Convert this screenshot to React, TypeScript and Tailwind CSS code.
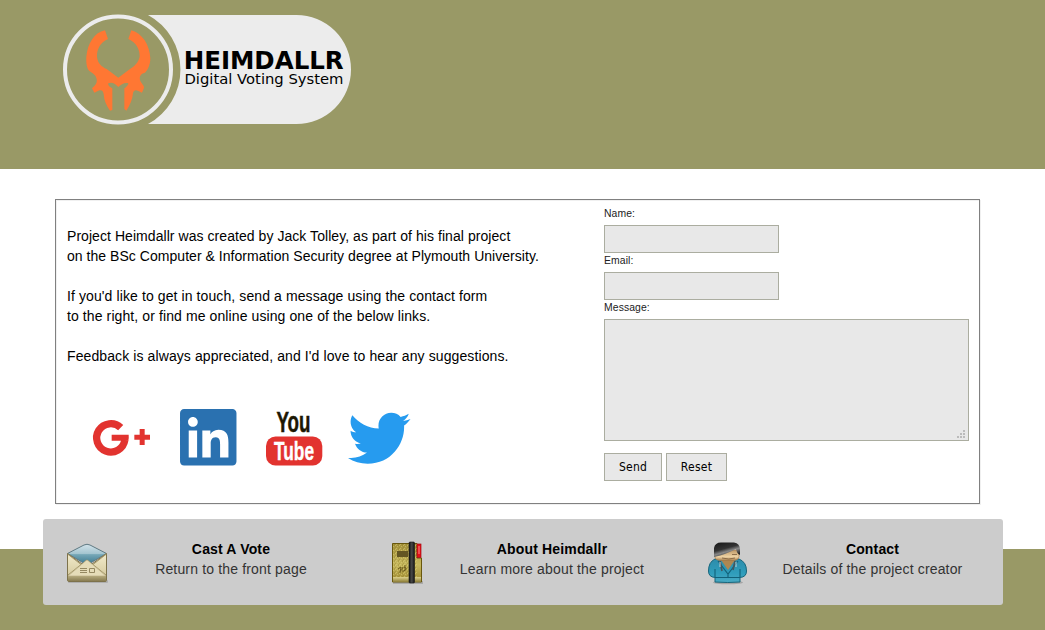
import type { ReactNode } from 'react';
import { FaLinkedin, FaTwitter } from 'react-icons/fa';

function Logo() {
  return (
    <svg width="300" height="120" viewBox="0 0 300 120" className="block">
      <path d="M93 10H241A54.5 54.5 0 0 1 296 64.5A54.5 54.5 0 0 1 241 119H93A62 62 0 0 0 93 10Z" fill="#ececec" />
      <circle cx="63" cy="64.5" r="53" fill="none" stroke="#ececec" strokeWidth="4" />
      <path
        transform="scale(.33333)"
        fill="#ff7733"
        d="M150 76L159 102C135 112 125 135 126 155C128 175 140 185 155 192L190 218L222 194C240 183 250 172 254 155C255 135 244 112 220 102L229 76C262 85 284 120 286 160C286 180 278 195 270 203C256 206 252 215 256 228C262 238 268 243 267 248L261 263L250 258C240 253 235 258 234 265C232 285 225 300 214 317L208 312V250C214 246 221 240 220 235C210 231 198 238 190 246C182 238 172 230 160 235C158 241 165 247 172 250V315L165 317C153 300 147 285 146 268C144 256 140 254 130 257L118 263L111 250C120 242 127 235 125 222C122 208 112 205 103 198C96 190 93 175 94 155C98 115 118 82 150 76Z"
      />
      <text x="128.7" y="64" fontSize="24" fontWeight="700" textLength="160" lengthAdjust="spacingAndGlyphs" fontFamily="DejaVu Sans, sans-serif">HEIMDALLR</text>
      <text x="129.5" y="79.3" fontSize="14.6" textLength="159" lengthAdjust="spacingAndGlyphs" fontFamily="DejaVu Sans, sans-serif">Digital Voting System</text>
    </svg>
  );
}

function GooglePlus() {
  return (
    <svg width="58" height="38" viewBox="0 0 174 114" className="block overflow-visible">
      <path d="M83 29A42.5 42.5 0 1 0 95.5 66" fill="none" stroke="#e2332f" strokeWidth="22" />
      <path d="M56 50H107Q108 60 106 68H56ZM124 50H140V33H155V50H171V65H155V81H140V65H124Z" fill="#e2332f" />
    </svg>
  );
}

function YouTube() {
  return (
    <svg width="60" height="60" viewBox="0 0 60 60" className="block overflow-visible">
      <text x="10.5" y="23.4" fontSize="29" fontWeight="700" fill="#1d1703" stroke="#1d1703" strokeWidth=".5" textLength="34" lengthAdjust="spacingAndGlyphs" fontFamily="Liberation Sans Narrow, Liberation Sans, sans-serif">You</text>
      <rect x="0" y="27.5" width="56.3" height="29" rx="9.5" fill="#e2332f" />
      <text x="8" y="51.2" fontSize="26" fontWeight="700" fill="#fff" stroke="#fff" strokeWidth=".4" textLength="40" lengthAdjust="spacingAndGlyphs" fontFamily="Liberation Sans Narrow, Liberation Sans, sans-serif">Tube</text>
    </svg>
  );
}

function EnvelopeIcon() {
  return (
    <svg width="44" height="44" viewBox="0 0 44 44" className="block">
      <defs>
        <linearGradient id="lining" x2="0" y2="1"><stop stopColor="#d3e3ea" /><stop offset=".45" stopColor="#a4c5d0" /><stop offset=".5" stopColor="#75a7b7" /><stop offset="1" stopColor="#36758b" /></linearGradient>
        <linearGradient id="paper" x2="0" y2="1"><stop stopColor="#f2ebcc" /><stop offset="1" stopColor="#cfc394" /></linearGradient>
        <linearGradient id="band" x2="0" y2="1"><stop stopColor="#b5aa7d" /><stop offset="1" stopColor="#897d53" /></linearGradient>
      </defs>
      <rect x="2" y="39" width="40" height="3" rx="1" fill="#777" opacity=".35" />
      <path d="M1.5 12.5L18 4Q21 2.5 24 4L40.5 12.5L21 24Z" fill="url(#lining)" stroke="#5f7982" />
      <path d="M1.5 12.5L16 23L21 19L26 23L40.5 12.5V39.5Q40.5 40.5 39 40.5H3Q1.5 40.5 1.5 39Z" fill="url(#paper)" stroke="#7d724b" />
      <path d="M1.5 13L15 23.5L2 34M40.5 13L27 23.5L40 34" fill="none" stroke="#9d9063" strokeWidth=".9" />
      <path d="M15 24L20 19.5Q21 18.5 22 19.5L27 24L40 35H2Z" fill="#e5dcb8" stroke="#b5aa80" strokeWidth=".6" />
      <rect x="2" y="35" width="38" height="5" fill="url(#band)" />
      <path d="M14 27.5H21M14 29.5H21M14 31.5H21M23.5 27.5H28.5V31.5H23.5Z" fill="none" stroke="#948861" />
    </svg>
  );
}

function NotebookIcon() {
  return (
    <svg width="34" height="44" viewBox="0 0 34 44" className="block">
      <defs>
        <linearGradient id="cover" x2="0" y2="1"><stop stopColor="#a4913b" /><stop offset=".55" stopColor="#c6b75e" /><stop offset=".84" stopColor="#ac9940" /></linearGradient>
        <linearGradient id="edge" x2="0" y2="1"><stop stopColor="#ddd18b" /><stop offset="1" stopColor="#8d7e38" /></linearGradient>
        <linearGradient id="strap"><stop stopColor="#111" /><stop offset=".5" stopColor="#494949" /><stop offset="1" stopColor="#111" /></linearGradient>
        <pattern id="grain" width="4" height="4" patternUnits="userSpaceOnUse"><path d="M0 0H1V1H0ZM2 1H3V2H2ZM1 3H2V4H1Z" fill="#ded178" opacity=".5" /><path d="M3 0H4V1H3ZM0 2H1V3H0ZM3 3H4V4H3Z" fill="#86741b" opacity=".3" /></pattern>
      </defs>
      <rect x="2" y="40" width="30" height="3" fill="#777" opacity=".4" />
      <path d="M1.5 2.5H26V17H30.5V41H1.5Z" fill="url(#cover)" stroke="#68570d" />
      <rect x="2" y="3" width="24" height="33" fill="url(#grain)" />
      <rect x="2" y="36" width="28" height="5" fill="url(#edge)" />
      <rect x="6" y="10" width="11" height="6" fill="#635523" />
      <path d="M7 28L10 26L9 32M12 26Q9 31 13 30Q17 27 13 26M14 24V30" fill="none" stroke="#6a591b" />
      <rect x="18" y="1" width="5.5" height="41" rx="1" fill="url(#strap)" stroke="#191919" strokeWidth=".6" />
      <rect x="26" y="3" width="4" height="13.5" fill="#e51018" stroke="#a20a10" strokeWidth=".7" /><path d="M28 5V13" stroke="#ff8888" />
    </svg>
  );
}

function PersonIcon() {
  return (
    <svg width="42" height="44" viewBox="0 0 42 44" className="block">
      <defs>
        <linearGradient id="hair" x2=".5" y2="1"><stop stopColor="#171717" /><stop offset=".5" stopColor="#333" /><stop offset=".7" stopColor="#888" /><stop offset="1" stopColor="#232323" /></linearGradient>
        <linearGradient id="face" x2="0" y2="1"><stop stopColor="#bc9766" /><stop offset=".65" stopColor="#eed3a4" /><stop offset="1" stopColor="#a77f50" /></linearGradient>
        <linearGradient id="hoodie" x2="0" y2="1"><stop stopColor="#2d8cab" /><stop offset=".6" stopColor="#2f9dbb" /><stop offset="1" stopColor="#4aaac3" /></linearGradient>
      </defs>
      <ellipse cx="21" cy="40.5" rx="15" ry="1.8" fill="#666" opacity=".4" />
      <path d="M8 17H32Q39.5 20 39.5 29Q39.5 35 33 35.5V40Q21 41 8 40V35.5Q1.5 35 1.5 29Q1.5 20 8 17Z" fill="url(#hoodie)" stroke="#17657b" />
      <path d="M14 18H28L21 28Z" fill="#ad8752" />
      <path d="M11 19L21 32L31 19M21 32V36M8 35.5H33M8 27V35M33 27V35" fill="none" stroke="#116179" strokeWidth="1.1" />
      <path d="M13 19L15 29M28 19L26 28" stroke="#45575d" strokeWidth="1.6" />
      <path d="M13 20V25M29 20V25" stroke="#e3ebed" strokeWidth=".8" />
      <path d="M8 8H32V15Q31 18.5 27 18.5H13Q8 18 8 15Z" fill="url(#face)" stroke="#a17747" strokeWidth=".6" />
      <path d="M7 15V6Q8 .5 14 .5H27Q33 1 33 8V13Q30 12 29 7Q20 12 7 15Z" fill="url(#hair)" />
      <path d="M25 12.5H30M15 16Q22 18 28 16" stroke="#795b39" strokeWidth=".8" fill="none" />
    </svg>
  );
}

function FooterLink({ icon, title, detail, iconClass, textClass }: { icon: ReactNode; title: string; detail: string; iconClass: string; textClass: string }) {
  return (
    <a className="flex shrink-0 items-start">
      <span className={iconClass}>{icon}</span>
      <span className={textClass}>
        <b className="block text-black">{title}</b>
        <span className="block">{detail}</span>
      </span>
    </a>
  );
}

export default function App() {
  const field = 'block h-7 w-[175px] rounded-none border border-[#abada0] bg-[#e8e8e8] px-2 outline-none';
  const label = 'block h-[19px] pt-px text-[10.4px] leading-[13px] tracking-[0.1px] text-[#222]';
  const button = "h-7 border border-[#abada0] bg-[#e8e8e8] text-center font-['DejaVu_Sans_Condensed','DejaVu_Sans',sans-serif] text-[12px] text-black";
  return (
    <div className="h-[630px] w-[1045px] overflow-hidden bg-white font-['Liberation_Sans',Arial,sans-serif] text-[14px] leading-5 text-black">
      <header className="h-[169px] bg-[#999966] pt-[5px] pl-[55px]"><Logo /></header>
      <main className="h-[380px] pt-[30px] pl-[55px]">
        <section className="flex h-[305px] w-[925px] border border-[#808080] shadow-[1px_1px_0_#f0f0f0,inset_1px_1px_0_#f0f0f0]">
          <div className="w-[548px] shrink-0 pt-[26px] pl-[11px]">
            <p><span className="tracking-[0.057px]">Project Heimdallr was created by Jack Tolley, as part of his final project</span><br /><span className="tracking-[0.04px]">on the BSc Computer &amp; Information Security degree at Plymouth University.</span></p>
            <p className="mt-5 tracking-[0.1px]">If you'd like to get in touch, send a message using the contact form<br />to the right, or find me online using one of the below links.</p>
            <p className="mt-5 tracking-[0.1px]">Feedback is always appreciated, and I'd love to hear any suggestions.</p>
            <div className="mt-[38px] flex items-start pl-[25px]">
              <span className="mt-[14px] w-[87px] pl-[0.5px]"><GooglePlus /></span>
              <span className="ml-px mt-[5px] w-[86px]">
                <span className="flex h-[57px] w-[57px] items-center overflow-hidden"><FaLinkedin className="h-[64.5px] w-[56.5px] shrink-0 text-[#2a71b0]" /></span>
              </span>
              <span className="mt-[5px] w-[82px]"><YouTube /></span>
              <FaTwitter className="mt-[3px] h-[62.5px] w-[62.5px] text-[#269bef]" />
            </div>
          </div>
          <form className="pt-[6px]" onSubmit={(event) => event.preventDefault()}>
            <label className={label} htmlFor="name">Name:</label>
            <input id="name" className={field} />
            <label className={label} htmlFor="email">Email:</label>
            <input id="email" className={field} />
            <label className={label} htmlFor="message">Message:</label>
            <div className="grid h-[122px] w-[365px] border border-[#abada0] bg-[#e8e8e8]">
              <textarea id="message" className="col-start-1 row-start-1 resize-none bg-transparent outline-none" />
              <svg className="col-start-1 row-start-1 mr-[3px] mb-[2px] self-end justify-self-end" width="8" height="8" viewBox="0 0 8 8"><path d="M6 0H8V2H6ZM3 3H5V5H3ZM6 3H8V5H6ZM0 6H2V8H0ZM3 6H5V8H3ZM6 6H8V8H6Z" fill="#bbb" /></svg>
            </div>
            <div className="mt-3 flex gap-1"><button className={`${button} w-[58px] tracking-[0.15px]`}>Send</button><button className={`${button} w-[61px] tracking-[0.25px]`} type="reset">Reset</button></div>
          </form>
        </section>
      </main>
      <footer className="flex h-[81px] items-start bg-[#999966] pl-[43px]">
        <nav className="-mt-[30px] flex h-[86px] w-[960px] rounded-[3px] bg-[#cccccc] pt-5 tracking-[0.16px] text-[#333]">
          <FooterLink icon={<EnvelopeIcon />} title="Cast A Vote" detail="Return to the front page" iconClass="ml-[23px] mt-[2px] w-[44px]" textClass="ml-[36px] w-[170px] text-center" />
          <FooterLink icon={<NotebookIcon />} title="About Heimdallr" detail="Learn more about the project" iconClass="ml-[75px] mt-[2px] w-[34px]" textClass="ml-[27px] w-[200px] text-center" />
          <FooterLink icon={<PersonIcon />} title="Contact" detail="Details of the project creator" iconClass="ml-[55px] mt-[3px] w-[42px]" textClass="ml-[23px] w-[201px] text-center" />
        </nav>
      </footer>
    </div>
  );
}
